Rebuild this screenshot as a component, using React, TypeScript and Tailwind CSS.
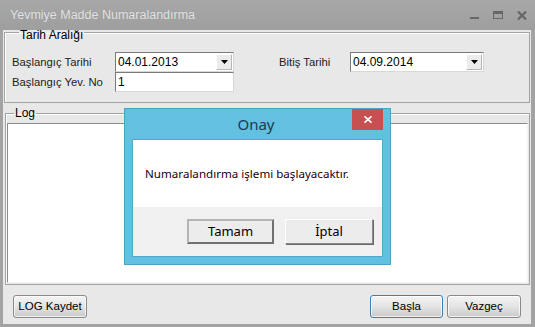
import React from 'react';

const win = { fontFamily: '"Liberation Sans", Arial, sans-serif' };
const seg = { fontFamily: '"Noto Sans", "Open Sans", sans-serif' };

function Combo({ value, w }: { value: string; w: string }) {
  return (
    <div className={`flex h-[20px] ${w} items-stretch border border-[#7a7a7a] border-r-[#d8d8d8] border-b-[#d8d8d8] bg-white`}>
      <span className="flex-1 pl-[2px] text-[12px] leading-[18px] text-black">{value}</span>
      <span className="m-[1px] flex w-[16px] items-center justify-center border border-[#b8b8b8] border-t-white border-l-white bg-[#ececec]">
        <svg width="7" height="4" viewBox="0 0 7 4">
          <path d="M0 0h7L3.5 4z" fill="#000" />
        </svg>
      </span>
    </div>
  );
}

function WinButton({ label, primary }: { label: string; primary?: boolean }) {
  return (
    <button
      className={`h-[23px] w-full rounded-[3px] border text-[11.5px] text-black bg-gradient-to-b from-[#f4f4f4] via-[#e4e4e4] to-[#cacaca] shadow-[inset_0_0_0_1px_rgba(255,255,255,0.7)] ${
        primary ? 'border-[#3c7fb1]' : 'border-[#8a8a8a]'
      }`}
    >
      {label}
    </button>
  );
}

export default function App() {
  return (
    <div style={win} className="relative flex h-[327px] w-[535px] flex-col overflow-hidden bg-[#a3a3a3]">
      {/* title bar */}
      <div className="flex h-[30px] items-center bg-gradient-to-b from-[#a8a8a8] to-[#9e9e9e] pl-[10px] pr-[8px]">
        <span className="flex-1 text-[12.5px] text-[#e4e4e4] [text-shadow:0_0_1px_rgba(0,0,0,0.15)]">
          Yevmiye Madde Numaralandırma
        </span>
        <div className="flex items-center gap-[14px]">
          <span className="mt-[6px] block h-[2px] w-[9px] bg-[#666]" />
          <span className="block h-[8px] w-[10px] border border-t-[3px] border-[#666]" />
          <svg width="10" height="9" viewBox="0 0 10 9">
            <path d="M1 0.5l8 8M9 0.5l-8 8" stroke="#666" strokeWidth="2.2" />
          </svg>
        </div>
      </div>

      {/* body */}
      <div className="mb-[3px] ml-[3px] mr-[4px] flex flex-1 flex-col bg-[#e8e8e8] text-[11.3px]">
        <fieldset className="mx-[1px] mt-[-8px] border border-[#a3a3a3] shadow-[inset_1px_1px_0_#fff] px-[7px] pb-[10px]">
          <legend className="ml-[7px] px-[1px] pt-[6px] text-[12px] leading-[14px] text-black">Tarih Aralığı</legend>
          <div className="mt-[10px] flex items-center">
            <span className="w-[103px] text-[#222]">Başlangıç Tarihi</span>
            <Combo value="04.01.2013" w="w-[119px]" />
            <span className="ml-[45px] w-[71px] text-[#222]">Bitiş Tarihi</span>
            <Combo value="04.09.2014" w="w-[134px]" />
          </div>
          <div className="flex items-center">
            <span className="w-[103px] text-[#222]">Başlangıç Yev. No</span>
            <div className="h-[20px] w-[119px] border border-[#7a7a7a] border-r-[#d8d8d8] border-b-[#d8d8d8] bg-white pl-[2px] text-[12px] leading-[18px] text-black">
              1
            </div>
          </div>
        </fieldset>

        <fieldset className="ml-[2px] mr-[1px] mt-[3px] flex flex-1 flex-col border border-[#a3a3a3] shadow-[inset_1px_1px_0_#fff] px-[1px] pb-[1px]">
          <legend className="ml-[7px] px-[1px] text-[12px] leading-[14px] text-black">Log</legend>
          <div className="mt-[3px] flex-1 border border-[#8a8a8a] border-r-[#f4f4f4] border-b-[#f4f4f4] bg-white" />
        </fieldset>

        <div className="flex h-[39px] items-start px-[10px] pt-[10px]">
          <div className="w-[74px]">
            <WinButton label="LOG Kaydet" />
          </div>
          <div className="flex-1" />
          <div className="flex gap-[4px]">
            <div className="w-[73px]"><WinButton label="Başla" primary /></div>
            <div className="w-[74px]"><WinButton label="Vazgeç" /></div>
          </div>
        </div>
      </div>

      {/* Onay dialog */}
      <div style={seg} className="absolute left-[125px] top-[109px] flex h-[155px] w-[265px] flex-col bg-[#62c0e0] px-[7px] pb-[7px] shadow-[0_0_0_1px_#4aa3c6]">
        <div className="flex h-[30px] items-start">
          <span className="flex-1 pt-[5px] text-center text-[15px] leading-[20px] text-[#1f3b4d] pl-[28px]">Onay</span>
          <span className="flex h-[21px] w-[31px] items-center justify-center bg-[#c75050]">
            <svg width="8" height="7" viewBox="0 0 8 7">
              <path d="M0.5 0.3l7 6.4M7.5 0.3l-7 6.4" stroke="#fff" strokeWidth="1.6" />
            </svg>
          </span>
        </div>
        <div className="flex flex-1 flex-col border border-[#4fa9cc]">
          <div className="flex h-[67px] items-center bg-white pl-[12px] text-[11.6px] text-[#1a0010]">
            Numaralandırma işlemi başlayacaktır.
          </div>
          <div className="flex flex-1 items-center justify-end gap-[11px] bg-[#f0f0f0] pr-[9px]">
            <button className="h-[25px] w-[87px] border-2 border-[#707070] border-t-[#b4b4b4] border-l-[#b4b4b4] bg-[#ececec] text-[13px] text-black">
              Tamam
            </button>
            <button className="h-[25px] w-[88px] border border-[#8a8a8a] border-t-white border-l-white bg-[#ececec] text-[13px] text-black shadow-[1px_1px_0_#696969]">
              İptal
            </button>
          </div>
        </div>
      </div>
    </div>
  );
}
